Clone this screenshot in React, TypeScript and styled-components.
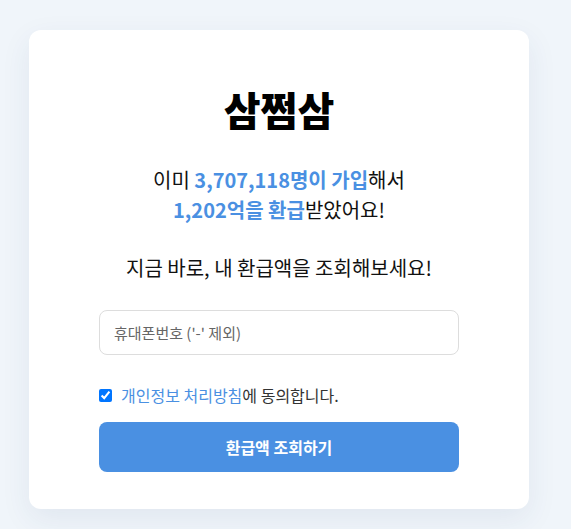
import React from 'react';
import styled, { createGlobalStyle } from 'styled-components';

const GlobalStyle = createGlobalStyle`
  body {
    margin: 0;
    background: #f0f5fa;
    font-family: "Noto Sans CJK KR", "Noto Sans", sans-serif;
  }
`;

const Page = styled.div`
  display: flex;
  justify-content: center;
  padding: 30px 13px 21px 0;
`;

const Card = styled.div`
  width: 500px;
  box-sizing: border-box;
  background: #fff;
  border-radius: 12px;
  box-shadow: 0 10px 30px rgba(40, 70, 120, 0.08);
  padding: 54px 70px 37px;
  display: flex;
  flex-direction: column;
  align-items: center;
`;

const Title = styled.h1`
  margin: 0;
  font-size: 40px;
  font-weight: 900;
  color: #000;
  line-height: 50px;
`;

const Lead = styled.p`
  margin: 31px 0 0;
  font-size: 20px;
  line-height: 30px;
  color: #111;
  text-align: center;
`;

const Highlight = styled.span`
  color: #4a90e2;
  font-weight: 700;
`;

const Call = styled.p`
  margin: 28px 0 0;
  font-size: 20px;
  line-height: 30px;
  color: #111;
`;

const Input = styled.input`
  margin-top: 27px;
  width: 100%;
  height: 45px;
  box-sizing: border-box;
  border: 1px solid #ddd;
  border-radius: 8px;
  padding: 0 14px;
  font-family: inherit;
  font-size: 15px;
  color: #333;
  &::placeholder {
    color: #666;
  }
`;

const Agree = styled.label`
  margin-top: 28px;
  align-self: stretch;
  display: flex;
  align-items: center;
  gap: 9px;
  font-size: 16px;
  color: #333;
  input {
    margin: 0;
    width: 13px;
    height: 13px;
  }
`;

const Link = styled.span`
  color: #4a90e2;
`;

const Button = styled.button`
  margin-top: 15px;
  width: 100%;
  height: 50px;
  border: none;
  border-radius: 8px;
  background: #4a90e2;
  color: #fff;
  font-family: inherit;
  font-size: 16px;
  font-weight: 700;
`;

export default function App() {
  return (
    <>
      <GlobalStyle />
      <Page>
        <Card>
          <Title>삼쩜삼</Title>
          <Lead>
            이미 <Highlight>3,707,118명이 가입</Highlight>해서
            <br />
            <Highlight>1,202억을 환급</Highlight>받았어요!
          </Lead>
          <Call>지금 바로, 내 환급액을 조회해보세요!</Call>
          <Input placeholder="휴대폰번호 ('-' 제외)" />
          <Agree>
            <input type="checkbox" defaultChecked />
            <span>
              <Link>개인정보 처리방침</Link>에 동의합니다.
            </span>
          </Agree>
          <Button>환급액 조회하기</Button>
        </Card>
      </Page>
    </>
  );
}
